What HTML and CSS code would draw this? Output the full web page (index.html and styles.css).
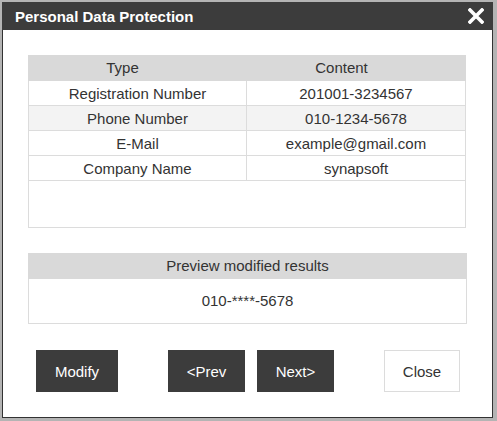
FILE: index.html
```html
<!DOCTYPE html>
<html lang="en">
  <head>
    <meta charset="UTF-8" />
    <title>Personal Data Protection</title>
    <link rel="stylesheet" href="styles.css">
  </head>
  <body>
    <div class="dialog">
      <!-- Title bar -->
      <div class="title-bar">
        <span class="title">Personal Data Protection</span>
        <svg class="close-x" width="16" height="16" viewBox="0 0 16 16">
          <path d="M2 2 L14 14 M14 2 L2 14" stroke="#fff" stroke-width="3.6" stroke-linecap="square" />
        </svg>
      </div>

      <div class="content">
        <!-- Found items -->
        <div class="grid-box">
          <div class="grid-head">
            <span class="col-type">Type</span>
            <span class="col-content">Content</span>
          </div>
          <table class="grid">
            <tr><td>Registration Number</td><td>201001-3234567</td></tr>
            <tr class="selected"><td>Phone Number</td><td>010-1234-5678</td></tr>
            <tr><td>E-Mail</td><td>example@gmail.com</td></tr>
            <tr><td>Company Name</td><td>synapsoft</td></tr>
          </table>
        </div>

        <!-- Preview -->
        <div class="preview">
          <div class="preview-head">Preview modified results</div>
          <div class="preview-body">010-****-5678</div>
        </div>

        <!-- Buttons -->
        <div class="buttons">
          <button class="btn btn-modify">Modify</button>
          <button class="btn btn-prev">&lt;Prev</button>
          <button class="btn btn-next">Next&gt;</button>
          <button class="btn btn-close">Close</button>
        </div>
      </div>
    </div>
  </body>
</html>
```

FILE: styles.css
```css
body {
  margin: 0;
  padding: 2px;
  background: #b4b4b4;
  font-family: "Liberation Sans", Arial, sans-serif;
  font-size: 15px;
  color: #333;
}

.dialog {
  box-sizing: border-box;
  width: 491px;
  height: 416px;
  background: #fff;
  border: 1px solid #333;
}

.title-bar {
  height: 28px;
  margin: -1px -1px 0;
  padding: 0 9px 0 13px;
  background: #3c3c3c;
  display: flex;
  align-items: center;
  justify-content: space-between;
}

.title {
  color: #fff;
  font-weight: bold;
  font-size: 15px;
}

.close-x {
  display: block;
}

.content {
  padding: 25px 26px 0 25px;
}

.grid-box {
  box-sizing: border-box;
  height: 173px;
  border: 1px solid #dcdcdc;
  border-top: 0;
}

.grid-head {
  display: flex;
  height: 26px;
  line-height: 26px;
  margin: 0 -1px;
  background: #d9d9d9;
  text-align: center;
}

.col-type {
  width: 189px;
}

.col-content {
  flex: 1;
}

.grid {
  width: 100%;
  border-collapse: collapse;
}

.grid td {
  height: 24px;
  padding: 0;
  text-align: center;
  border-bottom: 1px solid #dcdcdc;
}

.grid td:first-child {
  width: 217px;
  border-right: 1px solid #dcdcdc;
}

.grid tr.selected td {
  background: #f3f3f3;
}

.preview {
  margin-top: 25px;
  margin-right: -1px;
  border: 1px solid #dcdcdc;
  border-top: 0;
}

.preview-head {
  height: 26px;
  line-height: 26px;
  margin: 0 -1px;
  background: #d9d9d9;
  text-align: center;
}

.preview-body {
  height: 44px;
  line-height: 44px;
  text-align: center;
}

.buttons {
  display: flex;
  margin-top: 26px;
  padding-left: 8px;
}

.btn {
  box-sizing: border-box;
  height: 42px;
  border: 0;
  background: #3c3c3c;
  color: #fff;
  font-family: inherit;
  font-size: 15px;
}

.btn-modify {
  width: 82px;
}

.btn-prev {
  width: 77px;
  margin-left: 50px;
}

.btn-next {
  width: 77px;
  margin-left: 12px;
}

.btn-close {
  width: 76px;
  margin-left: 50px;
  background: #fff;
  color: #333;
  border: 1px solid #dcdcdc;
}
```
